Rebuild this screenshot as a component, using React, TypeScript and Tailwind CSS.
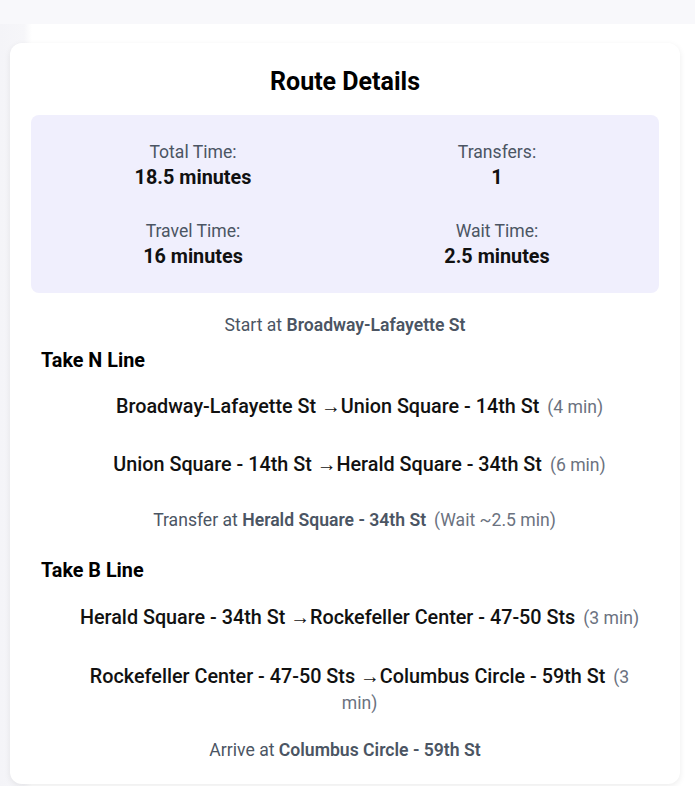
import React from "react";

export default function App() {
  return (
    <div
      className="min-h-[786px] bg-[#f7f7fa] text-[#111111]"
      style={{ fontFamily: "Roboto, 'Noto Sans', sans-serif" }}
    >
      <div className="h-[24px] bg-[#f8f8fb]" />
      <div className="bg-[linear-gradient(to_right,#f4f4f8_0px,#f6f6f9_24px,#ffffff_32px)] pt-[19px] pb-[2px]">
        <div className="ml-[10px] w-[670px] rounded-xl bg-white px-[21px] pt-[23px] pb-[22px] shadow-[0_2px_6px_rgba(0,0,0,0.08)]">
          <h2 className="text-center text-[25px] font-bold leading-[32px] text-black">Route Details</h2>

          <div className="mt-[17px] grid grid-cols-2 gap-x-5 gap-y-[27px] rounded-lg bg-[#f0effd] px-5 pt-[25px] pb-[22px]">
            <div className="text-center">
              <div className="text-[17.6px] leading-[24px] text-[#4b5563]">Total Time:</div>
              <div className="text-[19.8px] font-bold leading-[28px] text-[#111111]">18.5 minutes</div>
            </div>
            <div className="text-center">
              <div className="text-[17.6px] leading-[24px] text-[#4b5563]">Transfers:</div>
              <div className="text-[19.8px] font-bold leading-[28px] text-[#111111]">1</div>
            </div>
            <div className="text-center">
              <div className="text-[17.6px] leading-[24px] text-[#4b5563]">Travel Time:</div>
              <div className="text-[19.8px] font-bold leading-[28px] text-[#111111]">16 minutes</div>
            </div>
            <div className="text-center">
              <div className="text-[17.6px] leading-[24px] text-[#4b5563]">Wait Time:</div>
              <div className="text-[19.8px] font-bold leading-[28px] text-[#111111]">2.5 minutes</div>
            </div>
          </div>

          <p className="mt-[20px] text-center text-[17.6px] leading-[24px] text-[#4b5563]">
            Start at <span className="font-semibold">Broadway-Lafayette St</span>
          </p>

          <div className="px-[10px]">
            <h3 className="mt-[10px] text-[19.8px] font-bold leading-[28px] text-black">Take N Line</h3>
            <ul className="mt-[3px] pl-[29px]">
              <li className="py-4 text-center text-[19.8px] font-medium leading-[26px] text-[#111111]">
                Broadway-Lafayette St →Union Square - 14th St
                <span className="ml-2 text-[17.6px] font-normal text-[#6b7280]">(4 min)</span>
              </li>
              <li className="py-4 text-center text-[19.8px] font-medium leading-[26px] text-[#111111]">
                Union Square - 14th St →Herald Square - 34th St
                <span className="ml-2 text-[17.6px] font-normal text-[#6b7280]">(6 min)</span>
              </li>
            </ul>
          </div>

          <p className="mt-[14px] pl-[19px] text-center text-[17.6px] leading-[24px] text-[#4b5563]">
            Transfer at <span className="font-semibold">Herald Square - 34th St</span>
            <span className="ml-2 text-[#6b7280]">(Wait ~2.5 min)</span>
          </p>

          <div className="px-[10px]">
            <h3 className="mt-[25px] text-[19.8px] font-bold leading-[28px] text-black">Take B Line</h3>
            <ul className="mt-[4px] pl-[29px]">
              <li className="py-4 text-center text-[19.8px] font-medium leading-[26px] text-[#111111]">
                Herald Square - 34th St →Rockefeller Center - 47-50 Sts
                <span className="ml-2 text-[17.6px] font-normal text-[#6b7280]">(3 min)</span>
              </li>
              <li className="pt-[17px] pb-4 text-center text-[19.8px] font-medium leading-[25px] text-[#111111]">
                Rockefeller Center - 47-50 Sts →Columbus Circle - 59th St
                <span className="ml-2 text-[17.6px] font-normal text-[#6b7280]">(3 min)</span>
              </li>
            </ul>
          </div>

          <p className="mt-[6px] text-center text-[17.6px] leading-[24px] text-[#4b5563]">
            Arrive at <span className="font-semibold">Columbus Circle - 59th St</span>
          </p>
        </div>
      </div>
    </div>
  );
}
